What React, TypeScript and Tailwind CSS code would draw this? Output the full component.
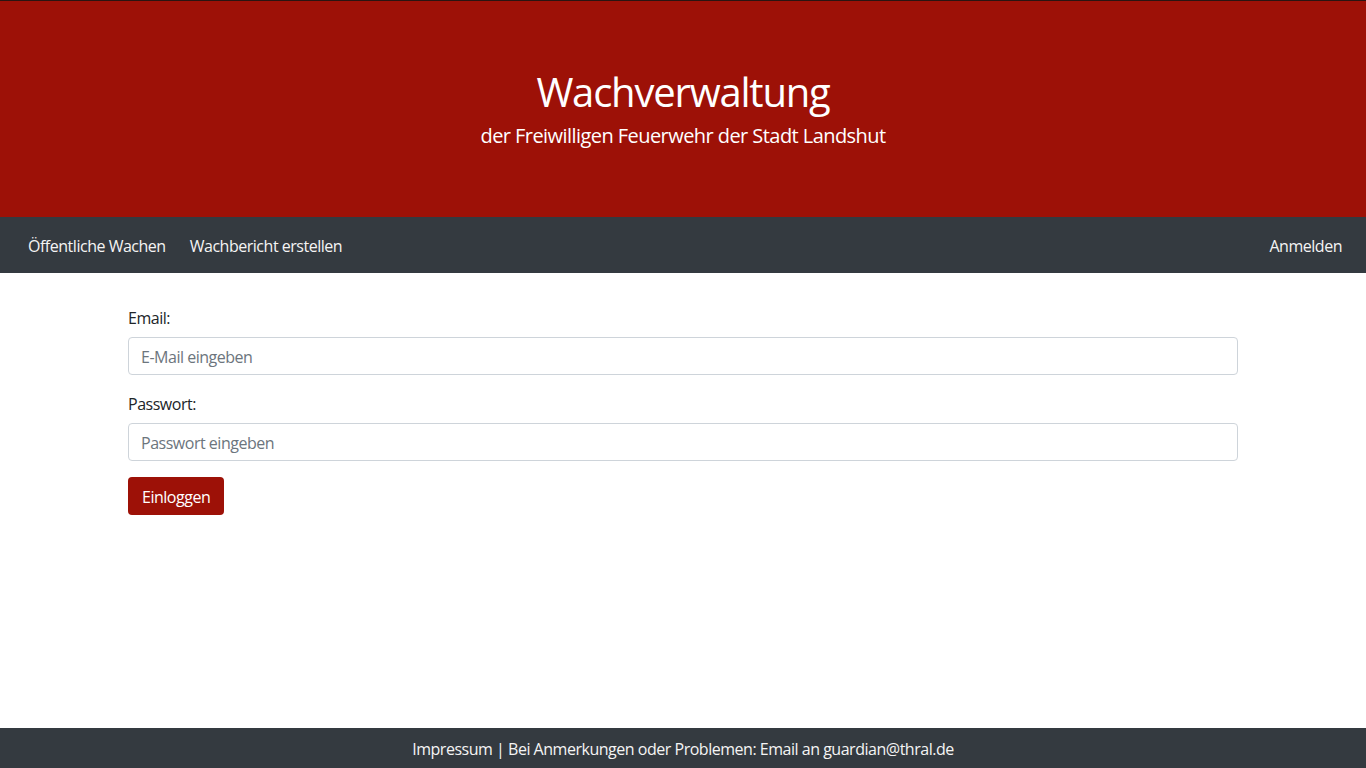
import React from "react";

const font = { fontFamily: '"Open Sans", "Noto Sans", sans-serif' };

function Header() {
  return (
    <header className="border-t border-[#2a1512] bg-[#9d1107] h-[217px] pt-[67px] text-center text-white">
      <h1 className="text-[40px] leading-[48px] tracking-[-0.03em]">Wachverwaltung</h1>
      <p className="mt-[5px] text-[20px] leading-[30px] tracking-[-0.028em]">der Freiwilligen Feuerwehr der Stadt Landshut</p>
    </header>
  );
}

function Navbar() {
  return (
    <nav className="flex h-[56px] items-center justify-between bg-[#343a40] px-4 pt-[2px] text-[16px] tracking-[-0.03em] text-[#f4f4f4]">
      <ul className="flex">
        <li><a className="block px-3 py-2" href="#">Öffentliche Wachen</a></li>
        <li><a className="block px-3 py-2" href="#">Wachbericht erstellen</a></li>
      </ul>
      <a className="block px-2 py-2" href="#">Anmelden</a>
    </nav>
  );
}

function LoginForm() {
  return (
    <form className="mx-auto mt-8 w-[1110px] text-[16px] tracking-[-0.03em] text-[#212529]">
      <div className="mb-4">
        <label className="mb-2 block h-6 pt-[1px] leading-6" htmlFor="email">Email:</label>
        <input
          id="email"
          type="email"
          placeholder="E-Mail eingeben"
          className="block h-[38px] w-full rounded border border-[#ced4da] px-3 pt-[2px] placeholder-[#6c757d]"
        />
      </div>
      <div className="mb-4">
        <label className="mb-2 block h-6 pt-[1px] leading-6" htmlFor="pwd">Passwort:</label>
        <input
          id="pwd"
          type="password"
          placeholder="Passwort eingeben"
          className="block h-[38px] w-full rounded border border-[#ced4da] px-3 pt-[2px] placeholder-[#6c757d]"
        />
      </div>
      <button type="button" className="h-[38px] rounded bg-[#9d1107] px-[14px] pt-[2px] text-white">
        Einloggen
      </button>
    </form>
  );
}

export default function App() {
  return (
    <div className="flex min-h-screen flex-col bg-white" style={font}>
      <Header />
      <Navbar />
      <main className="flex-1">
        <LoginForm />
      </main>
      <footer className="flex h-[40px] items-center justify-center bg-[#343a40] pt-[2px] text-[16px] tracking-[-0.03em] text-[#f4f4f4]">
        Impressum | Bei Anmerkungen oder Problemen: Email an guardian@thral.de
      </footer>
    </div>
  );
}
